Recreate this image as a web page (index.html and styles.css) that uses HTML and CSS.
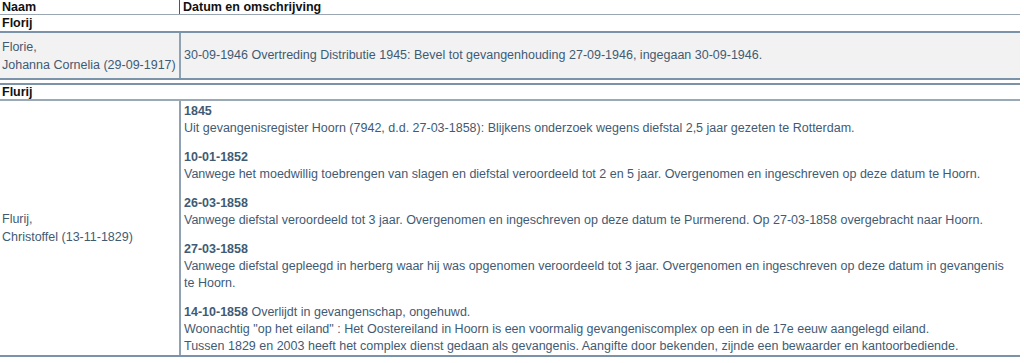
FILE: index.html
```html
<!DOCTYPE html>
<html lang="nl">
<head>
<meta charset="utf-8">
<title>Gevangenen</title>
<link rel="stylesheet" href="styles.css">
</head>
<body>
<div class="table">
  <div class="head">
    <div class="hcell">Naam</div>
    <div class="hcell sep">Datum en omschrijving</div>
  </div>

  <div class="group">
    <div class="gtitle">Florij</div>
    <div class="row shaded">
      <div class="name">Florie,<br>Johanna Cornelia (29-09-1917)</div>
      <div class="desc">30-09-1946 Overtreding Distributie 1945: Bevel tot gevangenhouding 27-09-1946, ingegaan 30-09-1946.</div>
    </div>
  </div>

  <div class="group next">
    <div class="gtitle">Flurij</div>
    <div class="row">
      <div class="name">Flurij,<br>Christoffel (13-11-1829)</div>
      <div class="desc entries">
        <p class="entry"><b>1845</b><br>Uit gevangenisregister Hoorn (7942, d.d. 27-03-1858): Blijkens onderzoek wegens diefstal 2,5 jaar gezeten te Rotterdam.</p>
        <p class="entry"><b>10-01-1852</b><br>Vanwege het moedwillig toebrengen van slagen en diefstal veroordeeld tot 2 en 5 jaar. Overgenomen en ingeschreven op deze datum te Hoorn.</p>
        <p class="entry"><b>26-03-1858</b><br>Vanwege diefstal veroordeeld tot 3 jaar. Overgenomen en ingeschreven op deze datum te Purmerend. Op 27-03-1858 overgebracht naar Hoorn.</p>
        <p class="entry"><b>27-03-1858</b><br>Vanwege diefstal gepleegd in herberg waar hij was opgenomen veroordeeld tot 3 jaar. Overgenomen en ingeschreven op deze datum in gevangenis te Hoorn.</p>
        <p class="entry"><b>14-10-1858</b> Overlijdt in gevangenschap, ongehuwd.<br>Woonachtig "op het eiland" : Het Oostereiland in Hoorn is een voormalig gevangeniscomplex op een in de 17e eeuw aangelegd eiland.<br>Tussen 1829 en 2003 heeft het complex dienst gedaan als gevangenis. Aangifte door bekenden, zijnde een bewaarder en kantoorbediende.</p>
      </div>
    </div>
  </div>
</div>
</body>
</html>
```

FILE: styles.css
```css
html, body {
  margin: 0;
  padding: 0;
  background: #ffffff;
}

body {
  font-family: "Liberation Sans", Arial, Helvetica, sans-serif;
  font-size: 12.5px;
  color: #3f5b74;
}

.table {
  width: 1020px;
}

.head {
  display: grid;
  grid-template-columns: 179px 1fr;
  border-bottom: 1px solid #9aa6b1;
  height: 14px;
}

.hcell {
  font-weight: bold;
  color: #111;
  font-size: 12.5px;
  line-height: 14px;
  padding-left: 2px;
}

.hcell.sep {
  border-left: 1px solid #555;
  padding-left: 3px;
}

.gtitle {
  font-weight: bold;
  color: #111;
  line-height: 16px;
  padding-left: 2px;
  border-bottom: 2px solid #7b93a8;
}

.group.next {
  margin-top: 3px;
  border-top: 2px solid #7b93a8;
}

.group.next .gtitle {
  line-height: 14px;
  border-bottom-color: #9aa9b6;
}

.row {
  display: grid;
  grid-template-columns: 179px 1fr;
  border-bottom: 2px solid #7b93a8;
}

.row.shaded {
  background: #f2f2f2;
}

.name {
  align-self: center;
  padding: 4px 2px;
  line-height: 18px;
}

.desc {
  border-left: 2px solid #8ea2b3;
  padding: 4px 3px;
  line-height: 17px;
  display: flex;
  flex-direction: column;
  justify-content: center;
}

.row.shaded .desc {
  min-height: 37px;
}

.entries {
  padding-top: 2px;
  padding-bottom: 0;
  gap: 12px;
}

.entry {
  margin: 0;
}

.entry b {
  color: #3f5b74;
}
```
